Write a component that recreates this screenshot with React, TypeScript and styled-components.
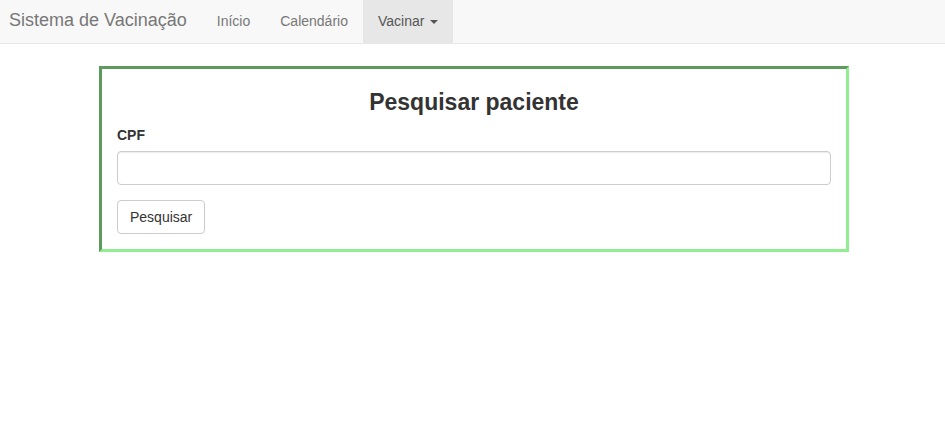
import styled, { createGlobalStyle } from "styled-components";

const GlobalStyle = createGlobalStyle`
  * {
    box-sizing: border-box;
  }

  body {
    margin: 0;
    background: #fff;
    color: #333;
    font-family: "Liberation Sans", Arial, Helvetica, sans-serif;
    font-size: 14px;
    line-height: 1.42857143;
  }
`;

const Navbar = styled.nav`
  display: flex;
  align-items: stretch;
  height: 44px;
  background: #f8f8f8;
  border-bottom: 1px solid #e7e7e7;
  margin-bottom: 22px;
`;

const Brand = styled.a`
  display: flex;
  align-items: center;
  padding: 0 15px 1px 9px;
  font-size: 18px;
  color: #777;
  text-decoration: none;
`;

const NavList = styled.ul`
  display: flex;
  margin: 0;
  padding: 0;
  list-style: none;
`;

const NavItem = styled.li<{ $active?: boolean }>`
  display: flex;
  align-items: center;
  padding: 0 15px 1px;
  color: ${(p) => (p.$active ? "#555" : "#777")};
  background: ${(p) => (p.$active ? "#e7e7e7" : "transparent")};
  cursor: pointer;
`;

const Caret = styled.span`
  display: inline-block;
  width: 0;
  height: 0;
  margin-left: 6px;
  margin-top: 2px;
  border-top: 4px solid #555;
  border-left: 4px solid transparent;
  border-right: 4px solid transparent;
`;

const Container = styled.div`
  width: 750px;
  margin-left: calc(50% - 373.5px);
`;

const SearchBox = styled.form`
  border: 3px inset lightgreen;
  padding: 0 15px 15px;
`;

const Title = styled.h3`
  margin: 20px 0 10px;
  font-size: 23px;
  font-weight: bold;
  line-height: 1.15;
  text-align: center;
  color: #333;
`;

const FormGroup = styled.div`
  margin-bottom: 15px;
`;

const Label = styled.label`
  display: block;
  margin-bottom: 6px;
  font-weight: bold;
`;

const Input = styled.input`
  display: block;
  width: 100%;
  height: 34px;
  padding: 6px 12px;
  font: inherit;
  color: #555;
  background: #fff;
  border: 1px solid #ccc;
  border-radius: 4px;
  box-shadow: inset 0 1px 1px rgba(0, 0, 0, 0.075);
`;

const Button = styled.button`
  height: 34px;
  padding: 6px 12px;
  font: inherit;
  color: #333;
  background: #fff;
  border: 1px solid #ccc;
  border-radius: 4px;
  cursor: pointer;
`;

const App = () => {
  return (
    <>
      <GlobalStyle />
      <Navbar>
        <Brand href="#">Sistema de Vacinação</Brand>
        <NavList>
          <NavItem>Início</NavItem>
          <NavItem>Calendário</NavItem>
          <NavItem $active>
            Vacinar
            <Caret />
          </NavItem>
        </NavList>
      </Navbar>
      <Container>
        <SearchBox onSubmit={(e) => e.preventDefault()}>
          <Title>Pesquisar paciente</Title>
          <FormGroup>
            <Label htmlFor="cpf">CPF</Label>
            <Input id="cpf" type="text" />
          </FormGroup>
          <Button type="submit">Pesquisar</Button>
        </SearchBox>
      </Container>
    </>
  );
};

export default App;
